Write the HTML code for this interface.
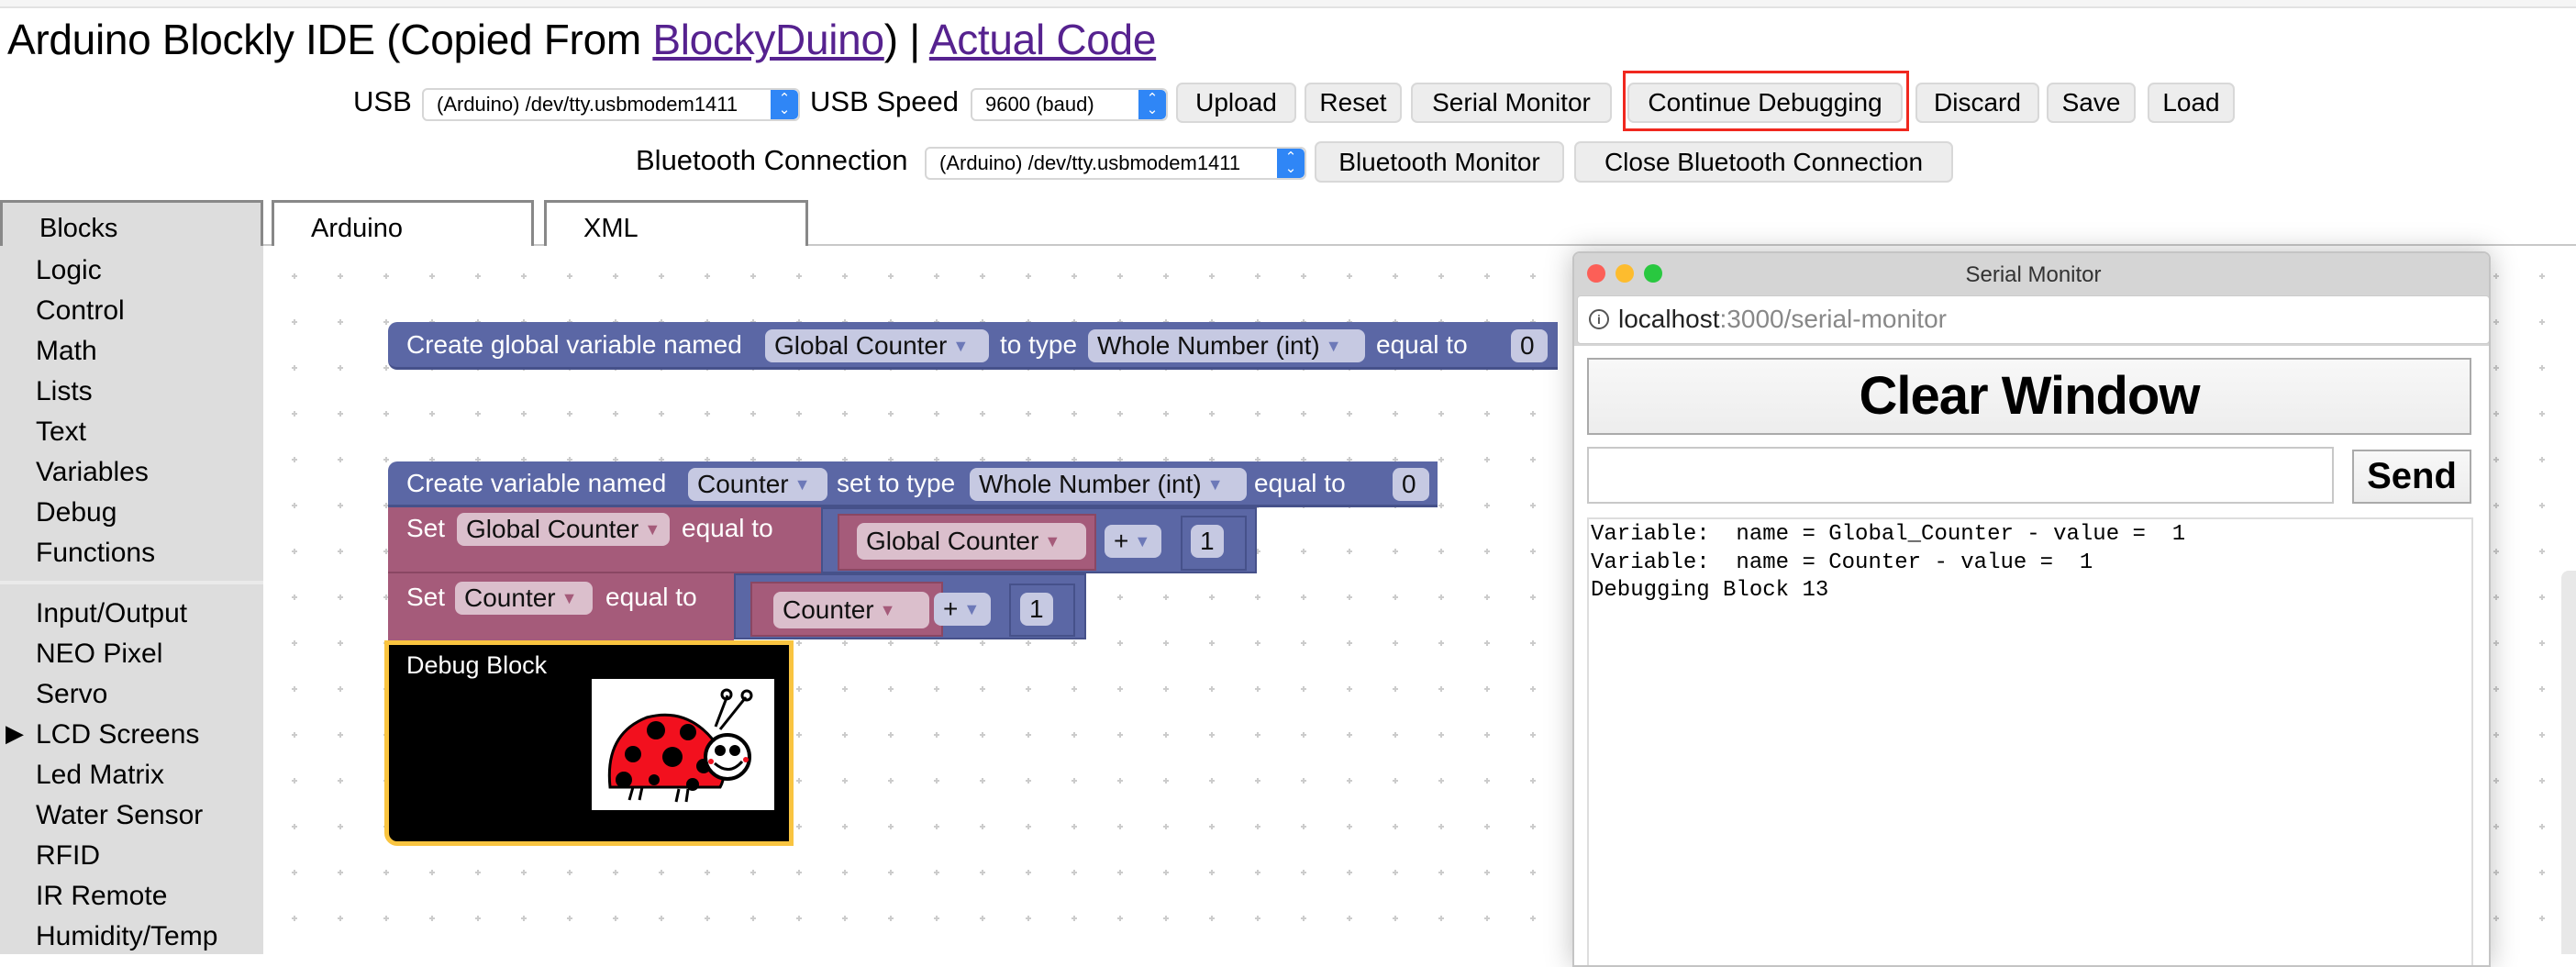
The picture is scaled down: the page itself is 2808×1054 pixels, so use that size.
<!DOCTYPE html>
<html><head><meta charset="utf-8"><style>
*{box-sizing:border-box;margin:0;padding:0}
body{width:2808px;height:1040px;overflow:hidden;background:#fff;font-family:"Liberation Sans",sans-serif;position:relative;color:#000}
.a{position:absolute}
.btn{position:absolute;background:#ededed;border:2px solid #d8d8d8;border-radius:7px;font-size:28px;display:flex;align-items:center;justify-content:center;white-space:nowrap}
.sel{position:absolute;background:#fff;border:2px solid #d6d6d6;border-radius:6px;font-size:22px;display:flex;align-items:center;padding-left:14px;white-space:nowrap;overflow:hidden}
.sel .ar{position:absolute;right:0;top:0;bottom:0;width:30px;background:#2f86f6;border-radius:0 5px 5px 0;color:#fff;font-size:15px;display:flex;align-items:center;justify-content:center;line-height:12px;text-align:center}
.lbl{position:absolute;font-size:31px;white-space:nowrap}
.tab{position:absolute;top:218px;height:50px;border:3px solid #888;border-bottom:none;font-size:29px;padding:12px 0 0 0}
.side div{position:absolute;left:39px;font-size:30px;white-space:nowrap}
.blk{position:absolute;color:#fff;font-size:28px;white-space:nowrap}
.f{position:absolute;background:#c6c9e2;color:#111;border-radius:8px;font-size:28px;white-space:nowrap;display:flex;align-items:center;padding-left:10px}
.fp{background:#dbbfcc}
.tri{color:#6d79b8;font-size:18px;margin-left:6px}
.fp .tri{color:#a55b7a}
</style></head><body>
<div class="a" style="left:0;top:0;width:2808px;height:9px;background:#f5f5f5;border-bottom:2px solid #e2e2e2"></div>
<div class="a" style="left:8px;top:16px;font-size:46px;white-space:nowrap;letter-spacing:-0.3px">Arduino Blockly IDE (Copied From <span style="color:#56228f;text-decoration:underline">BlockyDuino</span>) | <span style="color:#56228f;text-decoration:underline">Actual Code</span></div>

<div class="lbl" style="left:385px;top:93px">USB</div>
<div class="sel" style="left:460px;top:96px;width:412px;height:36px">(Arduino) /dev/tty.usbmodem1411<div class="ar">⌃<br>⌄</div></div>
<div class="lbl" style="left:883px;top:93px">USB Speed</div>
<div class="sel" style="left:1058px;top:96px;width:215px;height:36px">9600 (baud)<div class="ar">⌃<br>⌄</div></div>
<div class="btn" style="left:1282px;top:90px;width:131px;height:44px">Upload</div>
<div class="btn" style="left:1422px;top:90px;width:106px;height:44px">Reset</div>
<div class="btn" style="left:1538px;top:90px;width:219px;height:44px">Serial Monitor</div>
<div class="a" style="left:1769px;top:77px;width:312px;height:66px;border:3px solid #f0281e"></div>
<div class="btn" style="left:1774px;top:90px;width:300px;height:44px">Continue Debugging</div>
<div class="btn" style="left:2088px;top:90px;width:135px;height:44px">Discard</div>
<div class="btn" style="left:2231px;top:90px;width:97px;height:44px">Save</div>
<div class="btn" style="left:2341px;top:90px;width:95px;height:44px">Load</div>

<div class="lbl" style="left:693px;top:157px">Bluetooth Connection</div>
<div class="sel" style="left:1008px;top:160px;width:416px;height:36px">(Arduino) /dev/tty.usbmodem1411<div class="ar">⌃<br>⌄</div></div>
<div class="btn" style="left:1433px;top:154px;width:272px;height:45px">Bluetooth Monitor</div>
<div class="btn" style="left:1716px;top:154px;width:413px;height:45px">Close Bluetooth Connection</div>

<div class="a" style="left:0;top:266px;width:2808px;height:2px;background:#c8c8c8"></div>
<div class="tab" style="left:0;width:287px;background:#ddd;padding-left:40px;height:52px;border-bottom:none">Blocks</div>
<div class="tab" style="left:296px;width:286px;background:#fff;padding-left:40px">Arduino</div>
<div class="tab" style="left:593px;width:288px;background:#fff;padding-left:40px">XML</div>

<svg class="a" style="left:287px;top:268px" width="2521" height="772">
<defs><pattern id="g" x="9" y="8" width="50" height="50" patternUnits="userSpaceOnUse"><path d="M22 25h6M25 22v6" stroke="#ccc" stroke-width="2"/></pattern></defs>
<rect width="2521" height="772" fill="url(#g)"/>
</svg>

<div class="side a" style="left:0;top:268px;width:287px;height:772px;background:#ddd">
<div style="top:10px">Logic</div><div style="top:54px">Control</div><div style="top:98px">Math</div><div style="top:142px">Lists</div><div style="top:186px">Text</div><div style="top:230px">Variables</div><div style="top:274px">Debug</div><div style="top:318px">Functions</div>
<div style="top:365px;left:0;width:287px;height:4px;background:#eaeaea"></div>
<div style="top:384px">Input/Output</div><div style="top:428px">NEO Pixel</div><div style="top:472px">Servo</div>
<div style="top:516px;left:6px;font-size:26px">▶</div><div style="top:516px">LCD Screens</div>
<div style="top:560px">Led Matrix</div><div style="top:604px">Water Sensor</div><div style="top:648px">RFID</div><div style="top:692px">IR Remote</div><div style="top:736px">Humidity/Temp</div>
</div>

<!-- block 1 -->
<div class="a" style="left:423px;top:351px;width:1275px;height:52px;background:#5b67a5;border-radius:10px 0 0 10px;border-bottom:3px solid #46518a"></div>
<div class="blk" style="left:443px;top:360px">Create global variable named</div>
<div class="f" style="left:834px;top:359px;width:244px;height:36px">Global Counter<span class="tri">▼</span></div>
<div class="blk" style="left:1090px;top:360px">to type</div>
<div class="f" style="left:1186px;top:359px;width:302px;height:36px">Whole Number (int)<span class="tri">▼</span></div>
<div class="blk" style="left:1500px;top:360px">equal to</div>
<div class="f" style="left:1647px;top:359px;width:40px;height:36px;padding-left:10px">0</div>

<!-- block 2 -->
<div class="a" style="left:423px;top:503px;width:1144px;height:50px;background:#5b67a5;border-radius:10px 0 0 0;border-bottom:3px solid #46518a"></div>
<div class="blk" style="left:443px;top:511px">Create variable named</div>
<div class="f" style="left:750px;top:510px;width:152px;height:36px">Counter<span class="tri">▼</span></div>
<div class="blk" style="left:912px;top:511px">set to type</div>
<div class="f" style="left:1057px;top:510px;width:302px;height:36px">Whole Number (int)<span class="tri">▼</span></div>
<div class="blk" style="left:1367px;top:511px">equal to</div>
<div class="f" style="left:1518px;top:510px;width:40px;height:36px">0</div>

<div class="a" style="left:423px;top:553px;width:472px;height:72px;background:#a55b7a;border-bottom:2px solid #8a4763"></div>
<div class="a" style="left:895px;top:553px;width:475px;height:72px;background:#5b67a5;border:2px solid #46518a"></div>
<div class="a" style="left:913px;top:560px;width:282px;height:62px;background:#a55b7a;border:2px solid #8a4763"></div>
<div class="blk" style="left:443px;top:560px">Set</div>
<div class="f fp" style="left:498px;top:559px;width:232px;height:36px">Global Counter<span class="tri">▼</span></div>
<div class="blk" style="left:743px;top:560px">equal to</div>
<div class="f fp" style="left:934px;top:570px;width:250px;height:40px">Global Counter<span class="tri">▼</span></div>
<div class="f" style="left:1204px;top:572px;width:62px;height:36px">+<span class="tri">▼</span></div>
<div class="a" style="left:1287px;top:562px;width:72px;height:60px;border:2px solid #46518a"></div>
<div class="f" style="left:1298px;top:572px;width:36px;height:36px">1</div>

<div class="a" style="left:423px;top:625px;width:377px;height:73px;background:#a55b7a"></div>
<div class="a" style="left:800px;top:625px;width:384px;height:72px;background:#5b67a5;border:2px solid #46518a"></div>
<div class="a" style="left:818px;top:634px;width:210px;height:60px;background:#a55b7a;border:2px solid #8a4763"></div>
<div class="blk" style="left:443px;top:635px">Set</div>
<div class="f fp" style="left:496px;top:634px;width:150px;height:36px">Counter<span class="tri">▼</span></div>
<div class="blk" style="left:660px;top:635px">equal to</div>
<div class="f fp" style="left:843px;top:645px;width:170px;height:40px">Counter<span class="tri">▼</span></div>
<div class="f" style="left:1018px;top:646px;width:62px;height:36px">+<span class="tri">▼</span></div>
<div class="a" style="left:1100px;top:636px;width:72px;height:58px;border:2px solid #46518a"></div>
<div class="f" style="left:1112px;top:646px;width:36px;height:36px">1</div>

<!-- debug block -->
<div class="a" style="left:419px;top:698px;width:446px;height:224px;background:#000;border:5px solid #f9c440;border-radius:0 0 0 14px"></div>
<div class="blk" style="left:443px;top:710px;font-size:27px">Debug Block</div>
<svg class="a" style="left:645px;top:740px" width="199" height="143" viewBox="0 0 199 143">
<rect width="199" height="143" fill="#fff"/>
<path d="M135 52 L148 18 M140 55 L168 20" stroke="#000" stroke-width="3" fill="none"/>
<circle cx="147" cy="17" r="5" fill="none" stroke="#000" stroke-width="3"/><circle cx="169" cy="18" r="5" fill="none" stroke="#000" stroke-width="3"/>
<path d="M20 118 Q14 60 60 42 Q105 30 135 70 Q150 100 140 118 Z" fill="#f2101e" stroke="#000" stroke-width="3"/>
<circle cx="70" cy="56" r="10"/><circle cx="105" cy="58" r="9"/><circle cx="45" cy="82" r="9"/><circle cx="88" cy="85" r="11"/><circle cx="122" cy="95" r="8"/><circle cx="35" cy="110" r="9"/><circle cx="68" cy="110" r="6"/><circle cx="110" cy="115" r="7"/>
<circle cx="148" cy="85" r="24" fill="#fff" stroke="#000" stroke-width="4"/>
<circle cx="140" cy="78" r="6"/><circle cx="156" cy="78" r="6"/>
<path d="M134 92 Q150 106 164 90" stroke="#000" stroke-width="3" fill="none"/>
<circle cx="130" cy="90" r="3" fill="#f2101e"/><circle cx="168" cy="88" r="3" fill="#f2101e"/>
<path d="M45 118 l-4 14 M55 118 l-3 14 M95 120 l-3 14 M105 120 l-2 14" stroke="#000" stroke-width="3"/>
</svg>

<!-- serial monitor window -->
<div class="a" style="left:1714px;top:274px;width:1001px;height:780px;background:#fff;border:2px solid #c4c4c4;border-radius:8px 8px 0 0;box-shadow:0 0 30px rgba(0,0,0,0.25);overflow:hidden">
<div class="a" style="left:0;top:0;width:1001px;height:46px;background:#d5d5d5"></div>
<div class="a" style="left:14px;top:12px;width:20px;height:20px;border-radius:50%;background:#fc5f57"></div>
<div class="a" style="left:45px;top:12px;width:20px;height:20px;border-radius:50%;background:#fdbc2e"></div>
<div class="a" style="left:76px;top:12px;width:20px;height:20px;border-radius:50%;background:#29c840"></div>
<div class="a" style="left:0;top:10px;width:1001px;text-align:center;font-size:24px;color:#333">Serial Monitor</div>
<div class="a" style="left:0;top:46px;width:1001px;height:55px;background:#d5d5d5"></div>
<div class="a" style="left:3px;top:46px;width:995px;height:53px;background:#fff;border:1px solid #ccc;border-radius:4px"></div>
<div class="a" style="left:16px;top:61px;width:22px;height:22px;border:2px solid #555;border-radius:50%;font-size:14px;text-align:center;line-height:19px;color:#555;font-weight:bold">i</div>
<div class="a" style="left:48px;top:56px;font-size:28px;color:#222">localhost<span style="color:#888">:3000/serial-monitor</span></div>
<div class="a" style="left:14px;top:114px;width:964px;height:84px;background:linear-gradient(#f8f8f8,#ededed);border:2px solid #aaa;font-size:58px;font-weight:bold;text-align:center;line-height:80px;letter-spacing:-1px">Clear Window</div>
<div class="a" style="left:14px;top:211px;width:814px;height:62px;border:2px solid #c8c8c8;background:#fff"></div>
<div class="a" style="left:848px;top:214px;width:130px;height:59px;background:linear-gradient(#f8f8f8,#ececec);border:2px solid #aaa;font-size:40px;font-weight:bold;text-align:center;line-height:55px">Send</div>
<div class="a" style="left:14px;top:288px;width:966px;height:500px;border:2px solid #ddd;background:#fff;font-family:'Liberation Mono',monospace;font-size:24px;line-height:30.5px;padding:2px 2px;white-space:pre">Variable:  name = Global_Counter - value =  1
Variable:  name = Counter - value =  1
Debugging Block 13</div>
</div>
<div class="a" style="left:2792px;top:622px;width:16px;height:418px;background:#e8e8e8;border-radius:8px 0 0 0"></div>
</body></html>
